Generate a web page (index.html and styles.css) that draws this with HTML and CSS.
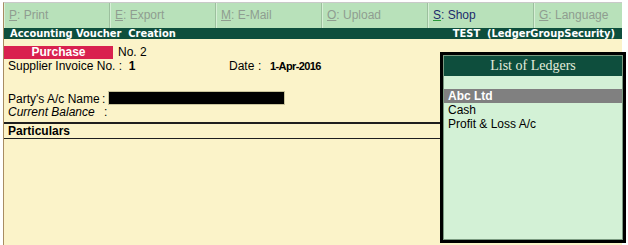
FILE: index.html
```html
<!DOCTYPE html>
<html>
<head>
    <meta charset="UTF-8">
    <title>Accounting Voucher Creation</title>
    <link rel="stylesheet" href="styles.css">
</head>
<body>
<div class="window">
    <!-- button bar -->
    <div class="toolBar">
        <div class="toolButton"><u>P</u>: Print</div>
        <div class="toolButton"><u>E</u>: Export</div>
        <div class="toolButton"><u>M</u>: E-Mail</div>
        <div class="toolButton"><u>O</u>: Upload</div>
        <div class="toolButton active"><u>S</u>: Shop</div>
        <div class="toolButton last"><u>G</u>: Language</div>
    </div>
    <div class="titleBar">
        <span>Accounting Voucher&nbsp; Creation</span>
        <span>TEST&nbsp; (LedgerGroupSecurity)</span>
    </div>
    <!-- voucher -->
    <div class="voucherBody">
        <div class="voucherType">
            <span class="typeName">Purchase</span>
            <span class="voucherNo">No. 2</span>
        </div>
        <div class="infoRow">
            <span class="invoiceLabel">Supplier Invoice No. :&nbsp; <b>1</b></span>
            <span class="dateLabel">Date</span><span class="dateColon">:</span><b class="dateValue">1-Apr-2016</b>
        </div>
        <div class="partyRow">
            <span class="partyLabel">Party's A/c Name</span>:<span class="partyBox"></span>
        </div>
        <div class="balanceRow">
            <span class="balanceLabel">Current Balance</span>:
        </div>
        <div class="particularsHead">Particulars</div>
        <div class="particularsArea"></div>
    </div>
    <!-- popup list -->
    <div class="ledgerList">
        <div class="ledgerTitle">List of Ledgers</div>
        <div class="ledgerItems">
            <div class="ledgerItem selected">Abc Ltd</div>
            <div class="ledgerItem">Cash</div>
            <div class="ledgerItem">Profit &amp; Loss A/c</div>
        </div>
    </div>
</div>
</body>
</html>
```

FILE: styles.css
```css
/*page*/
body {
    margin: 0;
    padding: 2px 0 0 3px;
    background: #ffffff;
    font-family: "Liberation Sans", Arial, sans-serif;
    font-size: 12px;
    color: #000000;
}

.window {
    position: relative;
    width: 618px;
    height: 243px;
    border-top: 1px solid #c9c9c9;
    border-left: 1px solid #a88c62;
    background: #fbf3c9;
}

/*button bar*/
.toolBar {
    display: flex;
    height: 25px;
    background: #b8e1ba;
}

.toolButton {
    flex: 0 0 106px;
    box-sizing: border-box;
    padding-left: 4px;
    line-height: 24px;
    color: #8f9d90;
    border-left: 1px solid #d6efd6;
    border-right: 1px solid #9cbf9e;
}

.toolButton u {
    text-decoration-color: #8f9d90;
}

.toolButton.active {
    color: #1d2a6c;
}

.toolButton.active u {
    text-decoration-color: #2a9a3a;
}

.toolButton.last {
    flex: 1;
    border-right: none;
}

/*title bar*/
.titleBar {
    display: flex;
    justify-content: space-between;
    height: 11px;
    padding: 0 7px 0 6px;
    background: #0e4e3d;
    color: #ffffff;
    font-family: "DejaVu Sans Condensed", "DejaVu Sans", sans-serif;
    font-weight: bold;
    font-size: 11px;
    line-height: 11px;
}

/*voucher*/
.voucherBody {
    padding-top: 7px;
}

.voucherType {
    display: flex;
    height: 13px;
    line-height: 13px;
}

.typeName {
    width: 109px;
    background: #d9214f;
    color: #ffffff;
    font-weight: bold;
    text-align: center;
}

.voucherNo {
    margin-left: 5px;
}

.infoRow {
    display: flex;
    height: 14px;
    line-height: 14px;
    padding-left: 4px;
}

.invoiceLabel {
    width: 221px;
}

.dateLabel {
    width: 29px;
}

.dateColon {
    width: 12px;
}

.dateValue {
    font-size: 11px;
    letter-spacing: -0.6px;
}

.partyRow {
    display: flex;
    margin-top: 19px;
    height: 14px;
    line-height: 14px;
    padding-left: 4px;
}

.partyLabel {
    width: 94px;
}

.partyBox {
    width: 177px;
    height: 14px;
    margin: -1px 0 0 3px;
    background: #000000;
    border: 1px solid #c8c39a;
    box-sizing: border-box;
}

.balanceRow {
    height: 13px;
    line-height: 13px;
    padding-left: 4px;
}

.balanceLabel {
    display: inline-block;
    width: 96px;
    font-style: italic;
}

.particularsHead {
    margin-top: 3px;
    height: 14px;
    line-height: 14px;
    padding-left: 4px;
    font-weight: bold;
    border-top: 2px solid #1e1e1e;
    border-bottom: 1px solid #1e1e1e;
}

/*popup list*/
.ledgerList {
    position: absolute;
    left: 436px;
    top: 49px;
    width: 186px;
    height: 191px;
    box-sizing: border-box;
    border: 3px solid #000000;
    background: #d3f1d6;
    box-shadow: inset 0 0 0 1px #7a9a80;
}

.ledgerTitle {
    height: 20px;
    line-height: 20px;
    margin: 1px 1px 0 1px;
    background: #0e4e3d;
    color: #e3eddc;
    text-align: center;
    font-family: "Liberation Serif", "Times New Roman", serif;
    font-size: 14px;
}

.ledgerItems {
    padding-top: 13px;
}

.ledgerItem {
    height: 14px;
    line-height: 14px;
    padding-left: 4px;
    margin: 0 1px;
}

.ledgerItem.selected {
    background: #808080;
    color: #ffffff;
    font-weight: bold;
}
```
